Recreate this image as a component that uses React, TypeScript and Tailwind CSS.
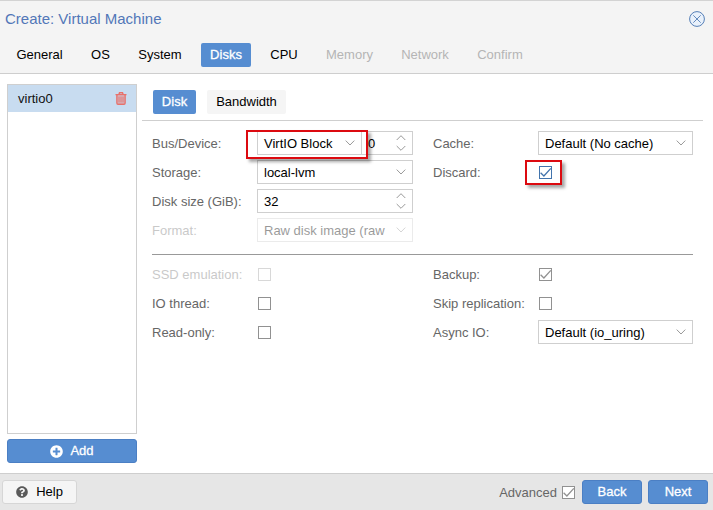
import React from "react";
import { FaPlusCircle, FaQuestionCircle } from "react-icons/fa";

const CLASS_LABEL = "shrink-0 pt-[2px] text-[#666]";

function Chevron() {
  return (
    <svg width="10" height="6" viewBox="0 0 10 6" fill="none" stroke="#999" className="shrink-0">
      <path d="M0.7 0.6 L5 5 L9.3 0.6" />
    </svg>
  );
}

function Spinner() {
  return (
    <svg width="10" height="16" viewBox="0 0 10 16" fill="none" stroke="#999" className="shrink-0">
      <path d="M0.7 5 L5 0.7 L9.3 5 M0.7 11 L5 15.3 L9.3 11" />
    </svg>
  );
}

function Field({ value, width, spin = false, disabled = false }: { value: string; width: string; spin?: boolean; disabled?: boolean }) {
  return (
    <div className={`flex h-6 shrink-0 items-center justify-between border border-[#cfcfcf] bg-white pr-[6px] pl-[6px] text-black ${width} ${disabled ? "opacity-40" : ""}`}>
      <span className="pt-[2px] whitespace-nowrap">{value}</span>
      {spin ? <Spinner /> : <Chevron />}
    </div>
  );
}

function Check({ checked = false, color = "#919191" }: { checked?: boolean; color?: string }) {
  return (
    <svg width="13" height="13" viewBox="0 0 13 13" fill="#fff" stroke={color} className="shrink-0">
      <rect x="0.5" y="0.5" width="12" height="12" />
      {checked && <path d="M1.6 6.8 L4.9 10 L11.8 2.4" fill="none" strokeWidth="1.3" />}
    </svg>
  );
}

function Row({ label, labelWidth, disabled = false, children }: { label: string; labelWidth: string; disabled?: boolean; children: React.ReactNode }) {
  return (
    <div className="flex h-6 items-center">
      <span className={`${CLASS_LABEL} ${labelWidth} ${disabled ? "opacity-35" : ""}`}>{label}</span>
      {children}
    </div>
  );
}

const STEPS = [
  { name: "General", box: "w-[65px]", tone: "text-black" },
  { name: "OS", box: "w-[37px]", tone: "text-black" },
  { name: "System", box: "w-[62px]", tone: "text-black" },
  { name: "Disks", box: "w-[50px]", tone: "rounded-[2px] bg-[#568dd1] text-white [-webkit-text-stroke:0.3px_white]" },
  { name: "CPU", box: "w-[46px]", tone: "text-black" },
  { name: "Memory", box: "w-[65px]", tone: "text-[#b5b5b5]" },
  { name: "Network", box: "w-[66px]", tone: "text-[#b5b5b5]" },
  { name: "Confirm", box: "w-[64px]", tone: "text-[#b5b5b5]" },
];

const BUTTON = "flex h-6 items-center justify-center rounded-[3px] border border-[#4b7fc4] bg-[#568dd1] text-white [-webkit-text-stroke:0.3px_white]";

export default function App() {
  return (
    <div className="flex h-[510px] w-[713px] flex-col overflow-hidden bg-white font-['Liberation_Sans',Arial,sans-serif] text-[13px] leading-[16px]">
      <header className="h-[74px] shrink-0 border-t border-b border-t-[#d3d3d3] border-b-[#cecece] bg-[#f4f4f4]">
        <div className="flex h-[36px] items-center justify-between pr-[8px] pl-[5px]">
          <h1 className="text-[15px] text-[#5277b8]">Create: Virtual Machine</h1>
          <svg width="16" height="16" viewBox="0 0 16 16" fill="none" stroke="#557fb7">
            <circle cx="8" cy="8" r="7.4" fill="#e9f1fb" />
            <path d="M4.3 4.3 L11.7 11.7 M11.7 4.3 L4.3 11.7" strokeWidth="0.9" />
          </svg>
        </div>
        <nav className="mt-[6px] flex gap-[10px] pl-[7px]">
          {STEPS.map((s) => (
            <div key={s.name} className={`flex h-6 items-center justify-center ${s.box} ${s.tone}`}>{s.name}</div>
          ))}
        </nav>
      </header>

      <main className="flex h-[399px] shrink-0 pt-[10px] pl-[7px]">
        <aside className="mr-[5px] w-[130px] shrink-0">
          <div className="h-[350px] border border-[#cfcfcf]">
            <div className="flex h-[27px] items-center justify-between bg-[#c8dcf0] pr-[9px] pl-[10px] text-[#111]">
              virtio0
              <svg width="12" height="13" viewBox="0 0 12 13" fill="none" stroke="#e8716b">
                <path d="M0.5 2.6 H11.5 M4 2.3 L4.5 0.7 H7.5 L8 2.3" strokeWidth="1.4" />
                <path d="M1.9 3 V11 Q1.9 12.2 3 12.2 H9 Q10.1 12.2 10.1 11 V3" fill="#e8716b" fillOpacity="0.3" strokeWidth="1.4" />
                <path d="M4 4.5 V10.5 M6 4.5 V10.5 M8 4.5 V10.5" />
              </svg>
            </div>
          </div>
          <button className={`${BUTTON} mt-[5px] w-full gap-[7px]`}>
            <FaPlusCircle size={13} />
            Add
          </button>
        </aside>

        <section className="w-[561px]">
          <div className="flex h-[37px] gap-[11px] border-b border-[#cfcfcf] pt-[6px] pl-[11px]">
            <div className="flex h-6 w-[43px] items-center justify-center rounded-[2px] bg-[#568dd1] text-white [-webkit-text-stroke:0.3px_white]">Disk</div>
            <div className="flex h-6 w-[79px] items-center justify-center rounded-[2px] bg-[#f5f5f5] text-black">Bandwidth</div>
          </div>
          <div className="w-[551px] pl-[10px]">
            <div className="flex h-[134px] gap-[20px] border-b border-[#999] pt-[10px]">
              <div className="flex w-[261px] flex-col gap-[5px]">
                <Row label="Bus/Device:" labelWidth="w-[105px]">
                  <div className="relative z-10 flex">
                    <Field value="VirtIO Block" width="w-[105px]" />
                    <div className="absolute -top-px -left-[11px] h-[29px] w-[122px] border-2 border-[#dc0a10] shadow-[3px_3px_3px_rgba(0,0,0,0.35)]" />
                  </div>
                  <Field value="0" width="w-[52px] -ml-px" spin />
                </Row>
                <Row label="Storage:" labelWidth="w-[105px]"><Field value="local-lvm" width="w-[156px]" /></Row>
                <Row label="Disk size (GiB):" labelWidth="w-[105px]"><Field value="32" width="w-[156px]" spin /></Row>
                <Row label="Format:" labelWidth="w-[105px]" disabled><Field value="Raw disk image (raw" width="w-[156px]" disabled /></Row>
              </div>
              <div className="flex w-[260px] flex-col gap-[5px]">
                <Row label="Cache:" labelWidth="w-[105px]"><Field value="Default (No cache)" width="w-[155px]" /></Row>
                <Row label="Discard:" labelWidth="w-[106px]">
                  <div className="relative">
                    <Check checked color="#4274ad" />
                    <div className="absolute -top-[6px] -left-[14px] h-[25px] w-[37px] border-2 border-[#dc0a10] shadow-[3px_3px_3px_rgba(0,0,0,0.35)]" />
                  </div>
                </Row>
              </div>
            </div>
            <div className="flex gap-[20px] pt-[7px]">
              <div className="flex w-[261px] flex-col gap-[5px]">
                <Row label="SSD emulation:" labelWidth="w-[106px]" disabled><Check color="#d8d8d8" /></Row>
                <Row label="IO thread:" labelWidth="w-[106px]"><Check /></Row>
                <Row label="Read-only:" labelWidth="w-[106px]"><Check /></Row>
              </div>
              <div className="flex w-[260px] flex-col gap-[5px]">
                <Row label="Backup:" labelWidth="w-[106px]"><Check checked /></Row>
                <Row label="Skip replication:" labelWidth="w-[106px]"><Check /></Row>
                <Row label="Async IO:" labelWidth="w-[105px]"><Field value="Default (io_uring)" width="w-[155px]" /></Row>
              </div>
            </div>
          </div>
        </section>
      </main>

      <footer className="flex h-[37px] shrink-0 items-center border-t border-[#cecece] bg-[#e6e6e6] pr-[5px] pl-[2px]">
        <button className="flex h-6 w-[75px] items-center justify-center gap-[8px] rounded-[3px] border border-[#d6d6d6] bg-[#f5f5f5] text-black">
          <FaQuestionCircle size={12} color="#5a5a5a" />
          Help
        </button>
        <div className="ml-auto flex items-center">
          <span className="mr-[5px] pt-[2px] text-[#666]">Advanced</span>
          <Check checked />
          <button className={`${BUTTON} ml-[7px] w-[60px]`}>Back</button>
          <button className={`${BUTTON} ml-[6px] w-[60px]`}>Next</button>
        </div>
      </footer>
    </div>
  );
}
